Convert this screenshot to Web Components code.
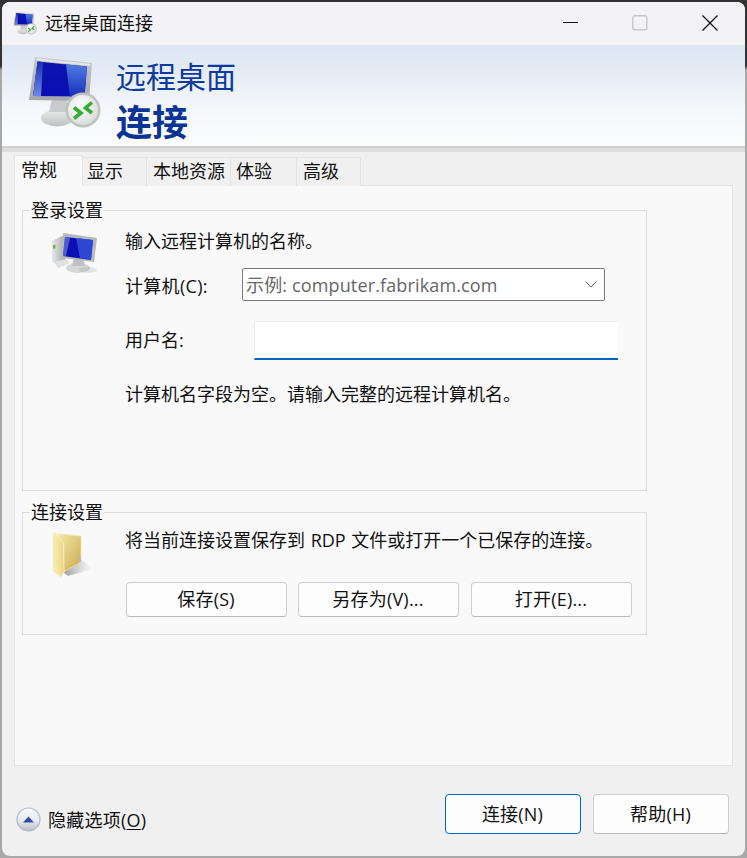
<!DOCTYPE html>
<html lang="zh">
<head>
<meta charset="utf-8">
<title>远程桌面连接</title>
<style>
  html, body { margin: 0; height: 100%; }
  body {
    background: linear-gradient(#333 0, #333 66px, #a8a8a8 70px);
    font-family: "Open Sans", "Noto Sans CJK SC", sans-serif;
    font-size: 18px;
    color: #111;
    overflow: hidden;
  }
</style>
</head>
<body>
<rdp-window>
  <rdp-titlebar slot="title">远程桌面连接</rdp-titlebar>
  <rdp-banner slot="banner"></rdp-banner>
  <rdp-tabs slot="tabs"></rdp-tabs>

  <rdp-group legend="登录设置" style="height:281px">
    <rdp-icon slot="icon" name="computer"></rdp-icon>
    <div style="margin-top:16px;line-height:28px">输入远程计算机的名称。</div>
    <div style="display:flex;align-items:center;margin-top:13px;height:33px">
      <span style="width:117px;flex:none;letter-spacing:.3px">计算机(C):</span>
      <rdp-combo placeholder="示例: computer.fabrikam.com"></rdp-combo>
    </div>
    <div style="display:flex;align-items:center;margin-top:20px;height:39px">
      <span style="width:129px;flex:none;padding-bottom:3px">用户名:</span>
      <rdp-input></rdp-input>
    </div>
    <div style="margin-top:20px;line-height:28px">计算机名字段为空。请输入完整的远程计算机名。</div>
  </rdp-group>

  <rdp-group legend="连接设置" style="height:123px;margin-top:21px">
    <rdp-icon slot="icon" name="folder"></rdp-icon>
    <div style="margin-top:13px;line-height:28px;word-spacing:1px">将当前连接设置保存到 RDP 文件或打开一个已保存的连接。</div>
    <div style="display:flex;gap:11px;margin-top:28px;margin-left:1px">
      <rdp-button style="width:161px;height:35px">保存(S)</rdp-button>
      <rdp-button style="width:161px;height:35px">另存为(V)...</rdp-button>
      <rdp-button style="width:161px;height:35px;margin-left:1px">打开(E)...</rdp-button>
    </div>
  </rdp-group>

  <rdp-footer slot="footer"></rdp-footer>
</rdp-window>

<script>
// little shared helper so each class stays short
const shadow = (el, html) => {
  el.attachShadow({ mode: "open" });
  el.shadowRoot.innerHTML = html;
};

const ICONS = {
  // big monitor with the green arrows, used in the banner and (scaled) in the title bar
  rdp: `
    <defs>
      <linearGradient id="scr" x1="0" y1="0" x2="0" y2="1">
        <stop offset="0" stop-color="#0c14ac"/><stop offset="1" stop-color="#0a0eb4"/>
      </linearGradient>
      <linearGradient id="glow" x1="0" y1="0" x2="0" y2="1">
        <stop offset="0" stop-color="#4f7ae4"/><stop offset="1" stop-color="#1730b8"/>
      </linearGradient>
      <linearGradient id="streak" x1="0" y1="0" x2="0" y2="1">
        <stop offset="0" stop-color="#1b2fb4"/><stop offset="1" stop-color="#6f86e4"/>
      </linearGradient>
      <linearGradient id="frm" x1="0" y1="0" x2="0" y2="1">
        <stop offset="0" stop-color="#c4c7cc"/><stop offset="1" stop-color="#a4a7ab"/>
      </linearGradient>
      <radialGradient id="disc" cx=".4" cy=".35" r=".8">
        <stop offset="0" stop-color="#ffffff"/><stop offset="1" stop-color="#d2d6d3"/>
      </radialGradient>
      <linearGradient id="base" x1="0" y1="0" x2="0" y2="1">
        <stop offset="0" stop-color="#eceded"/><stop offset="1" stop-color="#bdbfc0"/>
      </linearGradient>
    </defs>
    <ellipse cx="57" cy="118" rx="16" ry="8.500" fill="url(#base)"/>
    <path d="M52 98h14l3 14H49z" fill="#c9cbcd"/>
    <path d="M35 57 92 63 89 101 29 100z" fill="url(#frm)"/>
    <path d="M35.800 58 91 63.800 90 66 37 60.500z" fill="#e2e4e7"/>
    <path d="M37.500 61.500 87 66.500 84.500 96.500 33 96z" fill="url(#scr)"/>
    <path d="M66 64.500 87 66.500 84.500 96.500 70 96.300z" fill="url(#glow)"/>
    <path d="M37.500 61.500 43 62 41 96 33 96z" fill="url(#streak)"/>
    <circle cx="83" cy="110" r="17.500" fill="#bfc3c0"/>
    <circle cx="83" cy="110" r="15" fill="url(#disc)"/>
    <path d="M74 107.500 81 113 74 118.500" fill="none" stroke="#33ad33" stroke-width="3.600"/>
    <path d="M92 102.500 85.500 108 92 113" fill="none" stroke="#33ad33" stroke-width="3.600"/>`,
  computer: `
    <defs>
      <linearGradient id="scr" x1="0" y1="0" x2="1" y2="0.5">
        <stop offset="0" stop-color="#2a3fb8"/><stop offset=".6" stop-color="#0a10b4"/><stop offset="1" stop-color="#0a16a0"/>
      </linearGradient>
      <linearGradient id="twr" x1="0" y1="0" x2="1" y2="0">
        <stop offset="0" stop-color="#e8e9ea"/><stop offset="1" stop-color="#a0a3a6"/>
      </linearGradient>
    </defs>
    <path d="M52 241 62 236 66 238 65 265 60 266 52 262z" fill="url(#twr)"/>
    <rect x="53" y="245" width="2.500" height="3.500" fill="#6fb23a"/>
    <ellipse cx="78" cy="268" rx="12" ry="5" fill="#d6d8d8"/>
    <ellipse cx="88" cy="270" rx="9" ry="3" fill="#000" opacity=".08"/>
    <path d="M74 257h9l2 9H72z" fill="#bfc1c3"/>
    <path d="M63 233 97 238 94 262 62 258z" fill="#b7babd"/>
    <path d="M65 237 93 240 91 260 63 256z" fill="#0a10b4"/>
    <path d="M76 238 93 240 91 260 80 258z" fill="#3f5fe0" opacity=".7"/>
    <path d="M65 237 70 238 66 256 63 256z" fill="#7b90e6" opacity=".6"/>
    <path d="M54 262 66 259 70 263 58 268z" fill="#dfe0e1"/>`,
  folder: `
    <defs>
      <linearGradient id="back" x1="0" y1="0" x2="1" y2="1">
        <stop offset="0" stop-color="#f7e9a8"/><stop offset="1" stop-color="#c9a94e"/>
      </linearGradient>
      <linearGradient id="front" x1="0" y1="0" x2="1" y2="0">
        <stop offset="0" stop-color="#f9efb4"/><stop offset="1" stop-color="#ecd580"/>
      </linearGradient>
      <linearGradient id="sh" x1="0" y1="0" x2="1" y2="0">
        <stop offset="0" stop-color="#666" stop-opacity=".7"/><stop offset="1" stop-color="#aaa" stop-opacity="0"/>
      </linearGradient>
    </defs>
    <path d="M62 571 82 560 93 569 68 576z" fill="url(#sh)"/>
    <path d="M58 534 81 536 81 562 64 572 64 545z" fill="url(#back)" stroke="#eee3b0" stroke-width=".8"/>
    <path d="M53 533 55 532 63 543 64 572 61 577 53 571z" fill="url(#front)" stroke="#f5eec8" stroke-width=".6"/>
    <rect x="79.500" y="558" width="1.500" height="4" fill="#9cc4e4"/>`
};

class RdpWindow extends HTMLElement {
  connectedCallback() {
    shadow(this, `
      <style>
        :host {
          display: flex; flex-direction: column;
          margin: 2px; width: 743px; height: 854px;
          background: #f0f0f0;
          border-radius: 8px; overflow: hidden;
          box-sizing: border-box;
        }
        .panel {
          flex: none; height: 581px; box-sizing: border-box;
          margin: 0 12px; padding: 24px 7px 0;
          background: #f9f9f9; border: 1px solid #e3e3e3;
        }
      </style>
      <slot name="title"></slot>
      <slot name="banner"></slot>
      <slot name="tabs"></slot>
      <div class="panel"><slot></slot></div>
      <slot name="footer"></slot>`);
  }
}

class RdpTitlebar extends HTMLElement {
  connectedCallback() {
    shadow(this, `
      <style>
        :host {
          display: flex; align-items: center; flex: none; box-sizing: border-box;
          height: 43px; background: #f3f3f5; padding: 0 0 2px 43px; position: relative;
        }
        span { padding-bottom: 2px; }
        svg.logo { position: absolute; left: 10px; top: 8px; }
        .caps { margin-left: auto; display: flex; height: 100%; }
        .caps div { width: 70px; display: flex; align-items: center; justify-content: center; }
      </style>
      <svg class="logo" width="26" height="26" viewBox="24 52 80 80">${ICONS.rdp}</svg>
      <span><slot></slot></span>
      <div class="caps">
        <div style="width:69px"><svg width="16" height="16"><path d="M0 7.500h15" stroke="#111" stroke-width="1"/></svg></div>
        <div><svg width="16" height="16"><rect x=".8" y=".8" width="14" height="14" rx="2" fill="none" stroke="#c8c8c8" stroke-width="1.400"/></svg></div>
        <div><svg width="16" height="16"><path d="M.5.5 15.500 15.500M15.500.5 .5 15.500" stroke="#111" stroke-width="1.300"/></svg></div>
      </div>`);
  }
}

class RdpBanner extends HTMLElement {
  connectedCallback() {
    shadow(this, `
      <style>
        :host {
          display: flex; flex: none; height: 101px; box-sizing: border-box;
          background: linear-gradient(#dbe6f2 0, #e4ebf5 25%, #f5f8fb 65%, #fbfcfc 100%);
          position: relative;
        }
        svg { position: absolute; left: 22px; top: 7px; }
        .txt { margin-left: 114px; color: #0d3a9e; }
        .a { font-size: 30px; line-height: 40px; margin-top: 12px; }
        .b { font-size: 36px; line-height: 46px; font-weight: 700; margin-top: 3px; color: #0a3596; }
      </style>
      <svg width="80" height="80" viewBox="24 52 80 80">${ICONS.rdp}</svg>
      <div class="txt"><div class="a">远程桌面</div><div class="b">连接</div></div>`);
  }
}

class RdpTabs extends HTMLElement {
  connectedCallback() {
    // width and left padding of each tab
    const tabs = [["常规", 69, 6], ["显示", 64, 4], ["本地资源", 84, 6], ["体验", 66, 5], ["高级", 64, 6]];
    const html = tabs.map(([t, w, p], i) =>
      `<div class="tab${i === 0 ? " on" : ""}" style="width:${w}px;padding-left:${p}px">${t}</div>`).join("");
    shadow(this, `
      <style>
        :host {
          display: block; flex: none; height: 40px; box-sizing: border-box;
          border-top: 2px solid #cfcfcf;
          padding: 0 0 0 12px; position: relative; z-index: 1; margin-bottom: -1px;
        }
        .line { height: 4px; background: #dedede; margin: 0 0 0 -12px; }
        .row { display: flex; height: 34px; align-items: flex-end; }
        .tab {
          box-sizing: border-box; height: 29px; line-height: 26px;
          background: #f0f0f0; border: 1px solid #e3e3e3; border-left: 0; border-bottom: 0;
        }
        .tab.on {
          height: 31px; background: #f9f9f9; line-height: 28px;
          border: 1px solid #e3e3e3; border-bottom: 0; border-radius: 2px 2px 0 0;
        }
      </style>
      <div class="line"></div>
      <div class="row">${html}</div>`);
  }
}

class RdpGroup extends HTMLElement {
  connectedCallback() {
    shadow(this, `
      <style>
        :host {
          display: flex; position: relative; box-sizing: border-box;
          width: 625px; border: 1px solid #dcdcdc;
        }
        .legend {
          position: absolute; left: 7px; top: -12px; padding: 0 1px;
          line-height: 22px; background: #f9f9f9;
        }
        .icon { width: 102px; flex: none; }
        .body { flex: 1; }
      </style>
      <div class="legend">${this.getAttribute("legend")}</div>
      <div class="icon"><slot name="icon"></slot></div>
      <div class="body"><slot></slot></div>`);
  }
}

class RdpIcon extends HTMLElement {
  connectedCallback() {
    const boxes = { computer: "50 231 50 44", folder: "50 530 46 50" };
    const name = this.getAttribute("name");
    const [x, y, w, h] = boxes[name].split(" ");
    const top = name === "computer" ? 20 : 17;
    shadow(this, `
      <style>:host { display: block; padding: ${top}px 0 0 27px; } svg { display: block; }</style>
      <svg width="${w}" height="${h}" viewBox="${x} ${y} ${w} ${h}">${ICONS[name]}</svg>`);
  }
}

class RdpCombo extends HTMLElement {
  connectedCallback() {
    shadow(this, `
      <style>
        :host {
          display: flex; align-items: center; box-sizing: border-box;
          width: 363px; height: 33px; padding: 0 7px 0 3px;
          background: #fff; border: 1px solid #7a7a7a; border-radius: 2px;
          color: #666;
        }
        span { flex: 1; padding-bottom: 2px; letter-spacing: .14px; }
      </style>
      <span>${this.getAttribute("placeholder")}</span>
      <svg width="12" height="7"><path d="M.5.5 6 6 11.500.5" fill="none" stroke="#666"/></svg>`);
  }
}

class RdpInput extends HTMLElement {
  connectedCallback() {
    shadow(this, `
      <style>
        :host {
          display: block; box-sizing: border-box; width: 364px; height: 39px;
          background: #fff; border: 1px solid #eeeeee; border-right: 0;
          border-bottom: 2px solid #0067c0;
        }
      </style>`);
  }
}

class RdpButton extends HTMLElement {
  connectedCallback() {
    shadow(this, `
      <style>
        :host {
          display: flex; align-items: center; justify-content: center; box-sizing: border-box;
          padding: 0 1px 3px 0; letter-spacing: .2px;
          background: #fdfdfd; border: 1px solid #cfcfcf; border-bottom-color: #b8b8b8;
          border-radius: 4px;
        }
        :host([primary]) { border: 1px solid #0067c0; }
      </style>
      <slot></slot>`);
  }
}

class RdpFooter extends HTMLElement {
  connectedCallback() {
    shadow(this, `
      <style>
        :host {
          display: flex; flex: none; align-items: flex-start;
          padding: 28px 16px 0 14px; position: relative;
        }
        .hide { display: flex; align-items: center; gap: 7px; height: 50px; letter-spacing: .25px; }
        u { text-underline-offset: 2px; }
        .btns { margin-left: auto; display: flex; gap: 12px; }
        rdp-button { width: 136px; height: 40px; }
      </style>
      <div class="hide">
        <svg width="25" height="25" viewBox="0 0 25 25">
          <defs>
            <linearGradient id="ball" x1="0" y1="0" x2="0" y2="1">
              <stop offset="0" stop-color="#fafbfd"/><stop offset=".55" stop-color="#e6e9ee"/><stop offset="1" stop-color="#b9bfbf"/>
            </linearGradient>
          </defs>
          <circle cx="12.500" cy="12.500" r="11.500" fill="url(#ball)" stroke="#aeb8d8" stroke-width="1.200"/>
          <path d="M7 15.500 12.500 9.500 18 15.500z" fill="#2c4ea0"/>
        </svg>
        <span>隐藏选项(<u>O</u>)</span>
      </div>
      <div class="btns">
        <rdp-button primary>连接(N)</rdp-button>
        <rdp-button>帮助(H)</rdp-button>
      </div>`);
  }
}

customElements.define("rdp-window", RdpWindow);
customElements.define("rdp-titlebar", RdpTitlebar);
customElements.define("rdp-banner", RdpBanner);
customElements.define("rdp-tabs", RdpTabs);
customElements.define("rdp-group", RdpGroup);
customElements.define("rdp-icon", RdpIcon);
customElements.define("rdp-combo", RdpCombo);
customElements.define("rdp-input", RdpInput);
customElements.define("rdp-button", RdpButton);
customElements.define("rdp-footer", RdpFooter);
</script>
</body>
</html>
